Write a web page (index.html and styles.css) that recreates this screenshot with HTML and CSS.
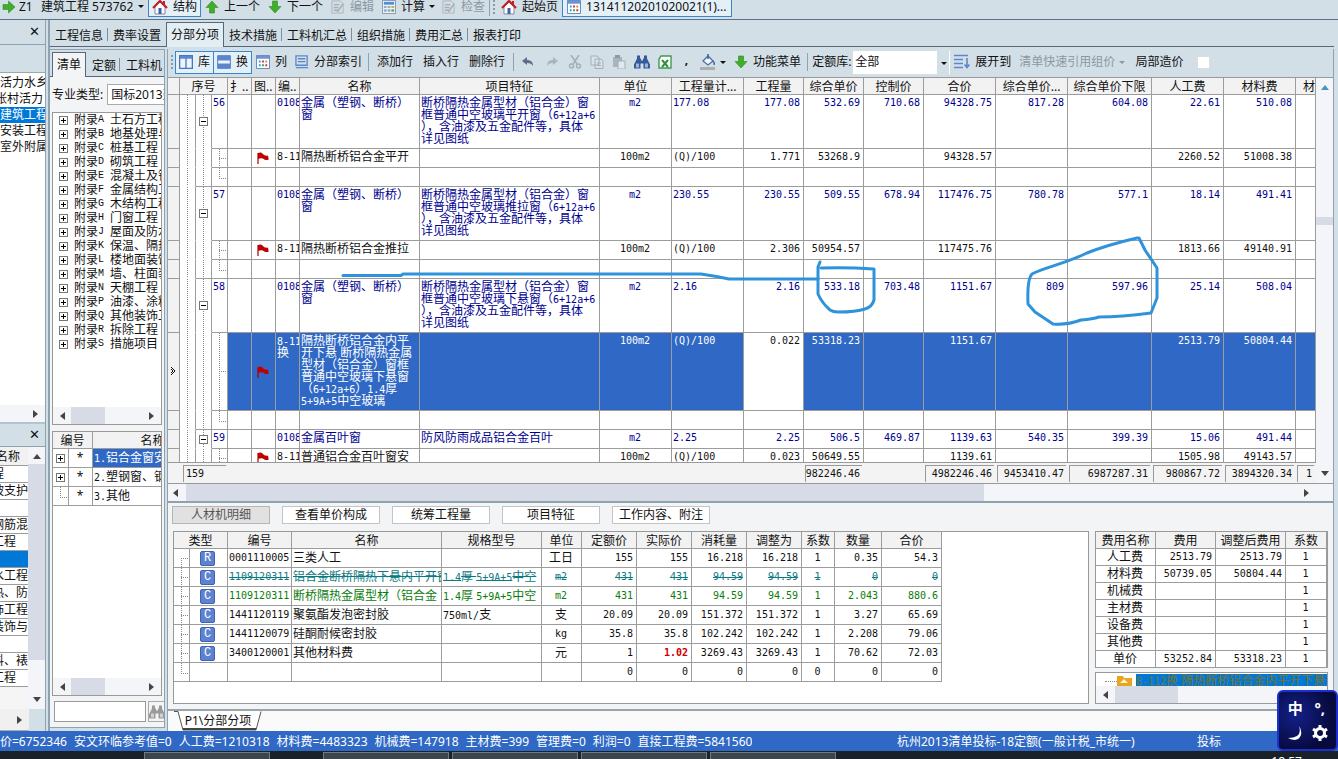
FILE: index.html
```html
<!DOCTYPE html>
<html lang="zh-CN">
<head>
<meta charset="utf-8">
<title>分部分项</title>
<link rel="stylesheet" href="styles.css">
</head>
<body>
<svg class="defs" aria-hidden="true">
  <symbol id="flag" viewBox="0 0 12 12"><path d="M1 1v11" stroke="#a00000" stroke-width="1.2"/><path d="M1 1c2-1 4-.5 5 1s3 2 5 1.500l.7 4c-2 1-4 .5-5-.6S3 6 1 7z" fill="#c00000"/></symbol>
  <symbol id="tri" viewBox="0 0 8 8"><path d="M7 0v8L2 4z" fill="#444"/></symbol>
  <symbol id="tri-blue" viewBox="0 0 8 8"><path d="M7 0v8L2 4z" fill="#4a94c4"/></symbol>
  <symbol id="house" viewBox="0 0 16 16"><path d="M3 8v7h10V8L8 3z" fill="#fff" stroke="#889" /><path d="M1 9l7-7 7 7" fill="none" stroke="#c22026" stroke-width="2.200"/><path d="M11 2h2v4h-2z" fill="#c22026"/><path d="M6.500 9h3v6h-3z" fill="#3b62b0"/></symbol>
  <symbol id="garrow" viewBox="0 0 14 14"><path d="M7 13L1 6.500h3.500V1h5v5.500H13z" fill="#3fae2a" stroke="#2f8d20" stroke-width=".6"/></symbol>
  <symbol id="sheet" viewBox="0 0 15 15"><path d="M.5.500h14v14H.5z" fill="#fff" stroke="#5a7fc0"/><path d="M1 1h13v3H1z" fill="#6f93d2"/><path d="M3 6h2v2H3zM3 10h2v2H3z" fill="#2c9fd8"/><path d="M6.500 6h2v2h-2zM10 10h2v2h-2z" fill="#d03040"/><path d="M10 6h2v2h-2z" fill="#e08030"/><path d="M6.500 10h2v2h-2z" fill="#3fa050"/></symbol>
  <symbol id="calc" viewBox="0 0 15 15"><path d="M.5.500h14v14H.5z" fill="#eef3f8" stroke="#7f95b5"/><path d="M2 2h11v3H2z" fill="#4f8fd8"/><path d="M2 6.500h3v2H2zM6 6.500h3v2H6zM2 10h3v2.500H2zM6 10h3v2.500H6z" fill="#9aabbf"/><path d="M10 6.500h3v2h-3z" fill="#e0a030"/><path d="M10 10h3v2.500h-3z" fill="#4faf50"/></symbol>
  <symbol id="edit" viewBox="0 0 15 15"><path d="M1 1h9l3 3v10H1z" fill="#d5dde2" stroke="#aab4bb"/><path d="M3 5h6M3 8h5M3 11h5M13 4l-5 7-1 2" stroke="#a3aeb6" fill="none" stroke-width="1.500"/></symbol>
  <symbol id="bino" viewBox="0 0 16 15"><path d="M3 1h3v3h1v2h2V4h1V1h3v3l3 6v4H9.500V9h-3v5H0v-4l3-6z" fill="currentColor"/><path d="M2 9h3v4H2zM11 9h3v4h-3z" fill="#fff" opacity=".55"/></symbol>
</svg>

<header class="top">
  <svg class="i14 right" ><use href="#garrow"/></svg><span class="z1">Z1</span><span class="proj">建筑工程 573762</span><button class="dd" aria-label="选择工程"></button>
  <button class="tb boxed"><svg class="i16"><use href="#house"/></svg>结构</button>
  <button class="tb g4"><svg class="i14 up"><use href="#garrow"/></svg>上一个</button>
  <button class="tb g8"><svg class="i14"><use href="#garrow"/></svg>下一个</button>
  <button class="tb g8 off" disabled><svg class="i14"><use href="#edit"/></svg>编辑</button>
  <button class="tb g8"><svg class="i14"><use href="#calc"/></svg>计算</button><button class="dd" aria-label="计算选项"></button>
  <button class="tb off g2" disabled><svg class="i14"><use href="#edit"/></svg>检查</button>
  <span class="sep tall"></span><span class="grip"></span>
  <button class="tb g4"><svg class="i16"><use href="#house"/></svg>起始页</button>
  <button class="tb boxed open"><svg class="i14"><use href="#sheet"/></svg>13141120201020021(1)...</button>
</header>

<main class="work">
  <aside class="left">
    <div class="cap"><button aria-label="关闭">✕</button></div>
    <div class="strip"></div>
    <ul class="proj-list">
      <li>活力水乡</li><li class="cut">张村活力</li><li class="on">建筑工程</li><li>安装工程</li><li>室外附属</li>
    </ul>
    <div class="hs end"><svg class="i8 flip"><use href="#tri"/></svg></div>
    <div class="cap second"><button aria-label="关闭">✕</button></div>
    <div class="chap">
      <ul>
        <li class="hd p8">名称</li><li class="p24">程</li><li>坡支护</li><li></li><li>钢筋混</li><li class="p12">工程</li><li class="on"></li><li>水工程</li><li>热、防</li><li>饰工程</li><li>装饰与</li><li></li><li>料、裱</li><li class="p12">工程</li>
      </ul>
      <div class="vs"><svg class="i8 u"><use href="#tri"/></svg><i class="thumb"></i><svg class="i8 d"><use href="#tri"/></svg></div>
    </div>
    <div class="hs low"><svg class="i8 flip"><use href="#tri"/></svg></div>
  </aside>

  <section class="frame">
    <nav class="tabs">
      <button>工程信息</button><button class="nosep">费率设置</button><button class="on">分部分项</button><button>技术措施</button><button>工料机汇总</button><button>组织措施</button><button>费用汇总</button><button class="nosep">报表打印</button>
    </nav>
    <div class="cols">
      <aside class="mid">
        <nav class="tabs sub"><button class="on">清单</button><button>定额</button><button>工料机</button></nav>
        <div class="kind"><label for="kind">专业类型:</label><select id="kind"><option>国标2013建设</option></select></div>
        <div class="box tree">
          <ul>
            <li><b></b>附录<span class="s">A</span>土石方工程</li><li><b></b>附录<span class="s">B</span>地基处理与</li><li><b></b>附录<span class="s">C</span>桩基工程</li><li><b></b>附录<span class="s">D</span>砌筑工程</li><li><b></b>附录<span class="s">E</span>混凝土及钢</li><li><b></b>附录<span class="s">F</span>金属结构工</li><li><b></b>附录<span class="s">G</span>木结构工程</li><li><b></b>附录<span class="s">H</span>门窗工程</li><li><b></b>附录<span class="s">J</span>屋面及防水</li><li><b></b>附录<span class="s">K</span>保温、隔热</li><li><b></b>附录<span class="s">L</span>楼地面装饰</li><li><b></b>附录<span class="s">M</span>墙、柱面装</li><li><b></b>附录<span class="s">N</span>天棚工程</li><li><b></b>附录<span class="s">P</span>油漆、涂料</li><li><b></b>附录<span class="s">Q</span>其他装饰工</li><li><b></b>附录<span class="s">R</span>拆除工程</li><li><b></b>附录<span class="s">S</span>措施项目</li>
          </ul>
          <div class="hs"><svg class="i8"><use href="#tri"/></svg><i class="thumb"></i><svg class="i8 flip"><use href="#tri"/></svg></div>
        </div>
        <div class="box names">
          <table class="grid">
            <colgroup><col class="w16"><col class="w24"><col class="w120"></colgroup>
            <tr><th colspan="2">编号</th><th>名称</th></tr>
            <tr><td class="pl"><b></b></td><td class="c">*</td><td class="hot"><span class="n">1.</span>铝合金窗安装</td></tr>
            <tr><td class="pl"><b></b></td><td class="c">*</td><td><span class="n">2.</span>塑钢窗、钢窗</td></tr>
            <tr><td class="elbow"></td><td class="c">*</td><td><span class="n">3.</span>其他</td></tr>
          </table>
          <div class="hs"><svg class="i8"><use href="#tri"/></svg><i class="thumb"></i><svg class="i8 flip"><use href="#tri"/></svg></div>
        </div>
        <div class="find"><input aria-label="查找"><button aria-label="查找"><svg class="i16 grey"><use href="#bino"/></svg></button></div>
      </aside>

      <div class="right-side">
        <div class="bar">
          <span class="grip"></span>
          <button class="tb boxed"><svg class="i14" viewBox="0 0 15 15"><path d="M.7.700h13.600v13.600H.7zM7.500 1v13" fill="#edf5fc" stroke="#4a74bd" stroke-width="1.400"/><path d="M1 1h13v3H1z" fill="#5c86cc"/></svg>库</button><button class="tb boxed join"><svg class="i14" viewBox="0 0 15 15"><path d="M.7.700h13.600v13.600H.7z" fill="#edf5fc" stroke="#4a74bd"/><path d="M1 1h13v5H1zM1 9h13v5H1z" fill="#5c86cc"/></svg>换</button>
          <button class="tb g4"><svg class="i14"><use href="#sheet"/></svg>列</button>
          <button class="tb g8"><svg class="i14" viewBox="0 0 15 15"><path d="M1 1h12v10H1zM3 4h8M3 7h8M1 13.500h13" fill="none" stroke="#5c86cc" stroke-width="1.400"/></svg>分部索引</button>
          <span class="sep g6"></span>
          <button class="tb g8">添加行</button><button class="tb g10">插入行</button><button class="tb g10">删除行</button>
          <span class="sep g8"></span>
          <button class="tb g8" aria-label="撤销"><svg class="i12" viewBox="0 0 12 12"><path d="M0 5l5-4v3c4 0 6 2 6 6-1-2-3-3-6-3v2z" fill="#5f6f87"/></svg></button>
          <button class="tb g12" aria-label="重做"><svg class="i12 flip" viewBox="0 0 12 12"><path d="M0 5l5-4v3c4 0 6 2 6 6-1-2-3-3-6-3v2z" fill="#a9b5be"/></svg></button>
          <button class="tb g10" aria-label="剪切"><svg class="i14" viewBox="0 0 14 14"><path d="M3 0l6 9M11 0L5 9" stroke="#a3afb7" stroke-width="1.500"/><circle cx="3.500" cy="11" r="2" fill="none" stroke="#a3afb7" stroke-width="1.400"/><circle cx="10.500" cy="11" r="2" fill="none" stroke="#a3afb7" stroke-width="1.400"/></svg></button>
          <button class="tb g8" aria-label="复制"><svg class="i14" viewBox="0 0 14 14"><path d="M1 1h6l2 2v7H1zM5 4h6l2 2v7.500H5z" fill="#d9e2e8" stroke="#a3afb7"/><path d="M7 8h4M7 10.500h4" stroke="#a3afb7"/></svg></button>
          <button class="tb g8" aria-label="粘贴"><svg class="i14" viewBox="0 0 14 14"><path d="M1 2h9v10H1z" fill="#a9b5bd"/><path d="M3 0h5v3H3z" fill="#8f9ba4"/><path d="M6 6h7v8H6z" fill="#e1e8ed" stroke="#a3afb7"/></svg></button>
          <button class="tb g8" aria-label="查找"><svg class="i16 navy"><use href="#bino"/></svg></button>
          <button class="tb g8" aria-label="导出 Excel"><svg class="i14" viewBox="0 0 14 14"><path d="M3 1h10v12H1V4z" fill="#fff" stroke="#3f9a4c" stroke-width="1.400"/><path d="M4 5l6 7M10 5l-6 7" stroke="#2f8f40" stroke-width="2"/></svg></button>
          <span class="comma">,</span>
          <button class="tb g12" aria-label="填充颜色"><svg class="i16" viewBox="0 0 16 16"><path d="M3 7l5-5 5 5-5 4z" fill="#f3f7fb" stroke="#4c6ea8" stroke-width="1.300"/><path d="M8 5V0M13 7q2 2 1 4" stroke="#3b62a4" stroke-width="1.500" fill="none"/><path d="M0 13h15v3H0z" fill="#b2adaa"/></svg></button><button class="dd" aria-label="颜色选项"></button>
          <button class="tb g4"><svg class="i14"><use href="#garrow"/></svg>功能菜单</button>
          <span class="sep g6"></span>
          <label for="lib">定额库:</label><span class="combo"><select id="lib"><option>全部</option></select></span>
          <button class="tb g4"><svg class="i16" viewBox="0 0 16 16"><path d="M0 1.500h14M0 5.500h9M0 9.500h9M0 13.500h9M13 4v9M10.500 10.500l2.500 3 2.500-3" fill="none" stroke="#5c86cc" stroke-width="1.600"/></svg>展开到</button>
          <button class="tb g8 off" disabled>清单快速引用组价</button><button class="dd dim" aria-label="组价选项"></button>
          <label class="chk" for="part">局部造价</label><input id="part" type="checkbox">
        </div>

        <div class="sheet">
          <div class="view">
            <div class="body">
            <table class="grid main">
              <colgroup><col class="w12"><col class="w16"><col class="w16"><col class="w16"><col class="w24"><col class="w24"><col class="w24"><col class="w120"><col class="w180"><col class="w72"><col class="w72"><col class="w60"><col class="w60"><col class="w60"><col class="w72"><col class="w72"><col class="w84"><col class="w72"><col class="w72"><col></colgroup>
              <tr><th></th><th colspan="3">序号</th><th class="nar">扌..</th><th class="nar">图..</th><th class="nar">编..</th><th>名称</th><th>项目特征</th><th>单位</th><th>工程量计...</th><th>工程量</th><th>综合单价</th><th>控制价</th><th>合价</th><th>综合单价...</th><th>综合单价下限</th><th>人工费</th><th>材料费</th><th class="last">材</th></tr>
              <tr class="item"><td></td><td class="v"></td><td class="v ex"><b></b></td><td class="n">56</td><td></td><td></td><td class="n">0108</td><td>金属（塑钢、断桥）<br>窗</td><td>断桥隔热金属型材（铝合金）窗<br>框普通中空玻璃平开窗（<span class="n">6+12a+6</span><br>），含油漆及五金配件等，具体<br>详见图纸</td><td class="n c">m2</td><td class="n">177.08</td><td class="n r">177.08</td><td class="n r">532.69</td><td class="n r">710.68</td><td class="n r">94328.75</td><td class="n r">817.28</td><td class="n r">604.08</td><td class="n r">22.61</td><td class="n r">510.08</td><td></td></tr>
              <tr><td></td><td class="v"></td><td class="v"></td><td class="tee"></td><td></td><td class="fl"><svg class="i12"><use href="#flag"/></svg></td><td class="n">8-112</td><td>隔热断桥铝合金平开</td><td></td><td class="n c">100m2</td><td class="n">(Q)/100</td><td class="n r">1.771</td><td class="n r">53268.9</td><td></td><td class="n r">94328.57</td><td></td><td></td><td class="n r">2260.52</td><td class="n r">51008.38</td><td></td></tr>
              <tr><td></td><td class="v"></td><td class="v bb"></td><td class="elbow"></td><td></td><td></td><td></td><td></td><td></td><td></td><td></td><td></td><td></td><td></td><td></td><td></td><td></td><td></td><td></td><td></td></tr>
              <tr class="item"><td></td><td class="v"></td><td class="v ex"><b></b></td><td class="n">57</td><td></td><td></td><td class="n">0108</td><td>金属（塑钢、断桥）<br>窗</td><td>断桥隔热金属型材（铝合金）窗<br>框普通中空玻璃推拉窗（<span class="n">6+12a+6</span><br>），含油漆及五金配件等，具体<br>详见图纸</td><td class="n c">m2</td><td class="n">230.55</td><td class="n r">230.55</td><td class="n r">509.55</td><td class="n r">678.94</td><td class="n r">117476.75</td><td class="n r">780.78</td><td class="n r">577.1</td><td class="n r">18.14</td><td class="n r">491.41</td><td></td></tr>
              <tr><td></td><td class="v"></td><td class="v"></td><td class="tee"></td><td></td><td class="fl"><svg class="i12"><use href="#flag"/></svg></td><td class="n">8-111</td><td>隔热断桥铝合金推拉</td><td></td><td class="n c">100m2</td><td class="n">(Q)/100</td><td class="n r">2.306</td><td class="n r">50954.57</td><td></td><td class="n r">117475.76</td><td></td><td></td><td class="n r">1813.66</td><td class="n r">49140.91</td><td></td></tr>
              <tr><td></td><td class="v"></td><td class="v bb"></td><td class="elbow"></td><td></td><td></td><td></td><td></td><td></td><td></td><td></td><td></td><td></td><td></td><td></td><td></td><td></td><td></td><td></td><td></td></tr>
              <tr class="item"><td></td><td class="v"></td><td class="v ex"><b></b></td><td class="n">58</td><td></td><td></td><td class="n">0108</td><td>金属（塑钢、断桥）<br>窗</td><td>断桥隔热金属型材（铝合金）窗<br>框普通中空玻璃下悬窗（<span class="n">6+12a+6</span><br>），含油漆及五金配件等，具体<br>详见图纸</td><td class="n c">m2</td><td class="n">2.16</td><td class="n r">2.16</td><td class="n r">533.18</td><td class="n r">703.48</td><td class="n r">1151.67</td><td class="n r">809</td><td class="n r">597.96</td><td class="n r">25.14</td><td class="n r">508.04</td><td></td></tr>
              <tr class="sel"><td class="cur"><svg class="i8" viewBox="0 0 8 8"><path d="M2 0l4 4-4 4M2 2l2 2-2 2" fill="none" stroke="#111"/></svg></td><td class="v"></td><td class="v"></td><td class="tee"></td><td></td><td class="fl"><svg class="i12"><use href="#flag"/></svg></td><td><span class="n">8-112</span><br>换</td><td>隔热断桥铝合金内平<br>开下悬 断桥隔热金属<br>型材（铝合金）窗框<br>普通中空玻璃下悬窗<br>（<span class="n">6+12a+6</span>）<span class="n">1.4</span>厚<br><span class="n">5+9A+5</span>中空玻璃</td><td></td><td class="n c">100m2</td><td class="n">(Q)/100</td><td class="n r edit">0.022</td><td class="n r">53318.23</td><td></td><td class="n r">1151.67</td><td></td><td></td><td class="n r">2513.79</td><td class="n r">50804.44</td><td></td></tr>
              <tr><td></td><td class="v"></td><td class="v bb"></td><td class="elbow"></td><td></td><td></td><td></td><td></td><td></td><td></td><td></td><td></td><td></td><td></td><td></td><td></td><td></td><td></td><td></td><td></td></tr>
              <tr class="item"><td></td><td class="v"></td><td class="v ex"><b></b></td><td class="n">59</td><td></td><td></td><td class="n">0108</td><td>金属百叶窗</td><td>防风防雨成品铝合金百叶</td><td class="n c">m2</td><td class="n">2.25</td><td class="n r">2.25</td><td class="n r">506.5</td><td class="n r">469.87</td><td class="n r">1139.63</td><td class="n r">540.35</td><td class="n r">399.39</td><td class="n r">15.06</td><td class="n r">491.44</td><td></td></tr>
              <tr><td></td><td class="v"></td><td class="v"></td><td class="tee"></td><td></td><td class="fl"><svg class="i12"><use href="#flag"/></svg></td><td class="n">8-116</td><td>普通铝合金百叶窗安</td><td></td><td class="n c">100m2</td><td class="n">(Q)/100</td><td class="n r">0.023</td><td class="n r">50649.55</td><td></td><td class="n r">1139.61</td><td></td><td></td><td class="n r">1505.98</td><td class="n r">49143.57</td><td></td></tr>
            </table>
            <svg class="ink" viewBox="340 230 830 100"><g fill="none" stroke="#2f93dc" stroke-width="3" stroke-linecap="round" stroke-linejoin="round"><path d="M343 275.500h58l2-1.500h298q14 2 28 5h89"/><path d="M820 262l-2 5v27q4 9 12 16 3 2 8 2 18 0 27-3 7-2 9-9v-31q-28-2-53-1"/><path d="M1137 238q-30 7-50 15c-25 12-42 14-55 21q-5 5-4 30l7 8 18 12q15 1 28-4 12-1 18-3 22 0 52-4l6-15v-30l-12-18-6-12z"/></g></svg>
            </div>
            <table class="grid sum">
              <colgroup><col class="w12"><col class="w48"><col class="w372"><col class="w144"><col class="w60"><col class="w60"><col class="w60"><col class="w72"><col class="w72"><col class="w84"><col class="w72"><col class="w72"><col></colgroup>
              <tr><td></td><td><div class="lft">159</div></td><td></td><td></td><td></td><td><div>4982246.46</div></td><td></td><td><div>4982246.46</div></td><td><div>9453410.47</div></td><td><div>6987287.31</div></td><td><div>980867.72</div></td><td><div>3894320.34</div></td><td><div>1</div></td></tr>
            </table>
          </div>
          <div class="vs wide"><svg class="i8 u"><use href="#tri-blue"/></svg><i class="thumb"></i><svg class="i8 d"><use href="#tri"/></svg></div>
        </div>
        <div class="hs big"><svg class="i8"><use href="#tri"/></svg><i class="thumb"></i><svg class="i8 flip"><use href="#tri"/></svg></div>

        <div class="detail">
          <div class="btns"><button class="on">人材机明细</button><button>查看单价构成</button><button>统筹工程量</button><button>项目特征</button><button>工作内容、附注</button></div>
          <div class="pair">
            <div class="box big">
              <table class="grid res">
                <colgroup><col class="w16"><col class="w38"><col class="w64"><col class="w150"><col class="w100"><col class="w40"><col class="w55"><col class="w55"><col class="w55"><col class="w55"><col class="w33"><col class="w47"><col class="w60"></colgroup>
                <tr><th colspan="2">类型</th><th>编号</th><th>名称</th><th>规格型号</th><th>单位</th><th>定额价</th><th>实际价</th><th>消耗量</th><th>调整为</th><th>系数</th><th>数量</th><th>合价</th></tr>
                <tr><td class="tee first"></td><td class="k"><b>R</b></td><td class="n">0001110005</td><td>三类人工</td><td></td><td class="c">工日</td><td class="n r">155</td><td class="n r">155</td><td class="n r">16.218</td><td class="n r">16.218</td><td class="n c">1</td><td class="n r">0.35</td><td class="n r">54.3</td></tr>
                <tr class="del"><td class="tee"></td><td class="k"><b>C</b></td><td class="n">1109120311</td><td>铝合金断桥隔热下悬内平开窗</td><td><span class="n">1.4</span>厚 <span class="n">5+9A+5</span>中空</td><td class="n c">m2</td><td class="n r">431</td><td class="n r">431</td><td class="n r">94.59</td><td class="n r">94.59</td><td class="n c">1</td><td class="n r">0</td><td class="n r">0</td></tr>
                <tr class="add"><td class="tee"></td><td class="k"><b>C</b></td><td class="n">1109120311</td><td>断桥隔热金属型材（铝合金</td><td><span class="n">1.4</span>厚 <span class="n">5+9A+5</span>中空</td><td class="n c">m2</td><td class="n r">431</td><td class="n r">431</td><td class="n r">94.59</td><td class="n r">94.59</td><td class="n c">1</td><td class="n r">2.043</td><td class="n r">880.6</td></tr>
                <tr><td class="tee"></td><td class="k"><b>C</b></td><td class="n">1441120119</td><td>聚氨酯发泡密封胶</td><td><span class="n">750ml/</span>支</td><td class="c">支</td><td class="n r">20.09</td><td class="n r">20.09</td><td class="n r">151.372</td><td class="n r">151.372</td><td class="n c">1</td><td class="n r">3.27</td><td class="n r">65.69</td></tr>
                <tr><td class="tee"></td><td class="k"><b>C</b></td><td class="n">1441120079</td><td>硅酮耐候密封胶</td><td></td><td class="n c">kg</td><td class="n r">35.8</td><td class="n r">35.8</td><td class="n r">102.242</td><td class="n r">102.242</td><td class="n c">1</td><td class="n r">2.208</td><td class="n r">79.06</td></tr>
                <tr><td class="tee"></td><td class="k"><b>C</b></td><td class="n">3400120001</td><td>其他材料费</td><td></td><td class="c">元</td><td class="n r">1</td><td class="n r red">1.02</td><td class="n r">3269.43</td><td class="n r">3269.43</td><td class="n c">1</td><td class="n r">70.62</td><td class="n r">72.03</td></tr>
                <tr><td class="elbow"></td><td></td><td></td><td></td><td></td><td></td><td class="n r">0</td><td class="n r">0</td><td class="n r">0</td><td class="n r">0</td><td class="n c">0</td><td class="n r">0</td><td class="n r">0</td></tr>
              </table>
            </div>
            <div class="fees">
              <div class="box top-box">
              <table class="grid fee">
                <colgroup><col class="w60"><col class="w60"><col class="w70"><col></colgroup>
                <tr><th>费用名称</th><th>费用</th><th>调整后费用</th><th>系数</th></tr>
                <tr><td class="c">人工费</td><td class="n r">2513.79</td><td class="n r">2513.79</td><td class="n c">1</td></tr>
                <tr><td class="c">材料费</td><td class="n r">50739.05</td><td class="n r">50804.44</td><td class="n c">1</td></tr>
                <tr><td class="c">机械费</td><td></td><td></td><td class="n c">1</td></tr>
                <tr><td class="c">主材费</td><td></td><td></td><td class="n c">1</td></tr>
                <tr><td class="c">设备费</td><td></td><td></td><td class="n c">1</td></tr>
                <tr><td class="c">其他费</td><td></td><td></td><td class="n c">1</td></tr>
                <tr><td class="c">单价</td><td class="n r">53252.84</td><td class="n r">53318.23</td><td class="n c">1</td></tr>
              </table>
              </div>
              <div class="box mini">
                <div class="leaf"><i class="dots"></i><svg class="fold" viewBox="0 0 15 13"><path d="M0 2h6l1 2h8v9H0z" fill="#e8a520"/><path d="M3 9l4-4 4 4z" fill="#fff4c8"/></svg><span class="pick"><span class="n">8-112</span>换 隔热断桥铝合金内平开下悬</span></div>
                <div class="hs"><svg class="i8"><use href="#tri"/></svg><i class="thumb"></i></div>
              </div>
            </div>
          </div>
        </div>
        <div class="pages"><button><svg viewBox="0 0 88 20"><path d="M0 .5h4L9 19h73l5-18.500" fill="#fff" stroke="#555"/><path d="M9 18h73" stroke="#444" stroke-width="2"/></svg><span>P1\分部分项</span></button></div>
      </div>
    </div>
  </section>
</main>

<footer class="status"><div class="tot"><span>价=6752346</span><span>安文环临参考值=0</span><span>人工费=1210318</span><span>材料费=4483323</span><span>机械费=147918</span><span>主材费=399</span><span>管理费=0</span><span>利润=0</span><span>直接工程费=5841560</span></div><span class="rule">杭州2013清单投标-18定额(一般计税_市统一)</span><span class="mode">投标</span></footer>
<div class="task"><i></i><i class="far"></i><i></i><i></i><i></i><time>18:57</time></div>
<div class="ime"><span>中</span><span>°,</span>
  <svg viewBox="0 0 16 16"><path d="M12 1q4 12-11 12 10 5 13-3 1-5-2-9z" fill="#fff"/></svg>
  <svg viewBox="0 0 16 16"><circle cx="8" cy="8" r="4.500" fill="none" stroke="#fff" stroke-width="3"/><path d="M8 0v3M8 13v3M1 4l3 2M12 10l3 2M1 12l3-2M12 6l3-2" stroke="#fff" stroke-width="3"/></svg>
</div>
</body>
</html>
```
FILE: styles.css
```css
* { box-sizing: border-box; }
html, body { height: 100%; }
body {
  margin: 0; display: flex; flex-direction: column; overflow: hidden;
  background: #d3dfe7; color: #111;
  font: 12px/16px "Noto Sans", "Noto Sans CJK SC", sans-serif;
  white-space: nowrap; position: relative;
}
button, select, input { font: inherit; color: inherit; margin: 0; padding: 0; }
button { border: 0; background: none; white-space: nowrap; }
ul { list-style: none; margin: 0; padding: 0; }
svg { display: block; flex: none; }
.defs { position: absolute; width: 0; height: 0; }
.i8 { width: 8px; height: 8px; }
.i12 { width: 12px; height: 12px; }
.i14 { width: 14px; height: 14px; }
.i16 { width: 16px; height: 16px; }
.flip { transform: scaleX(-1); }
.up { transform: scaleY(-1); }
.right { transform: rotate(-90deg); }
.u { transform: rotate(90deg); }
.d { transform: rotate(-90deg); }
.n { font: 10px/10px "DejaVu Sans Mono", monospace; }
.grey { color: #999; }
.navy { color: #345a9c; }

/* buttons shared by both tool bars */
.tb { display: flex; align-items: center; gap: 5px; flex: none; }
.off { color: #8b98a2; }
.boxed { border: 1px solid #3a86c8; background: #e4f0f8; padding: 0 3px; height: 23px; }
.join { margin-left: -1px; }
.sep { width: 1px; height: 18px; background: #8fa2b0; flex: none; }
.grip { width: 2px; height: 14px; flex: none; background: repeating-linear-gradient(#8a9aa6 0 2px, transparent 2px 4px); }
.dd { width: 14px; height: 16px; display: grid; place-items: center; flex: none; }
.dd::after { content: ""; border: 3px solid transparent; border-top-color: #111; margin-top: 3px; }
.dim::after { border-top-color: #8b98a2; }
.g2 { margin-left: 3px; }
.g4 { margin-left: 4px; }
.g6 { margin-left: 6px; }
.g8 { margin-left: 8px; }
.g10 { margin-left: 10px; }
.g12 { margin-left: 12px; }

.top { height: 20px; flex: none; display: flex; align-items: center; padding: 0 0 6px 2px; border-bottom: 1px solid #5b7186; overflow: hidden; }
.top .boxed { height: 21px; padding: 0 3px; }
.top .boxed.open { margin-left: 4px; padding: 0 4px; }
.z1 { margin-left: 3px; width: 22px; }
.proj { width: 93px; overflow: hidden; }
.top .sep { margin: 0 3px 0 4px; }
.top .grip + .tb { margin-left: 6px; }

.work { flex: 1; display: flex; min-height: 0; }

/* far left docked panels */
.left { width: 46px; flex: none; display: flex; flex-direction: column; border-right: 1px solid #8fa2b0; overflow: hidden; }
.cap { height: 25px; flex: none; display: flex; justify-content: flex-end; align-items: center; padding-right: 5px; border-bottom: 1px solid #8fa2b0; }
.cap button { font: 13px/12px "DejaVu Sans", sans-serif; }
.cap.second { border-top: 2px solid #b3c4cf; }
.strip { height: 28px; flex: none; border-bottom: 1px solid #9aa; }
.proj-list { flex: 1; background: #fff; padding-top: 2px; overflow: hidden; }
.proj-list li { height: 16px; }
.proj-list .cut { display: flex; justify-content: flex-end; padding-right: 2px; }
.proj-list .on, .chap .on { background: #0078d7; color: #fff; }
.hs { height: 17px; flex: none; background: #f3f5f8; display: flex; align-items: center; padding: 0 5px; }
.hs .flip { margin-left: auto; }
.hs .thumb { height: 100%; width: 34px; margin-left: 5px; background: #d6dbe6; }
.chap { display: flex; height: 262px; flex: none; background: #f5f5f5; }
.chap ul { width: 28px; }
.chap li { height: 17px; background: #fff; border-bottom: 1px solid #9c9c9c; display: flex; justify-content: flex-end; overflow: hidden; }
.chap .hd { background: #f1f1f1; height: 19px; line-height: 20px; }
.chap .p8 { padding-right: 8px; }
.chap .p12 { padding-right: 12px; }
.chap .p24 { padding-right: 24px; }
.vs { width: 17px; background: #f3f5f8; display: flex; flex-direction: column; align-items: center; justify-content: space-between; padding: 5px 0; }
.vs .thumb { flex: none; width: 100%; height: 196px; background: #d6dbe6; margin: 4px 0 auto; }
.hs.low { height: 22px; background: #f0f0f0; width: 29px; border-bottom: 1px solid #aaa; }

/* document frame */
.frame { flex: 1; min-width: 0; display: flex; flex-direction: column; border-left: 2px solid #8fa2b0; margin-left: 2px; padding-right: 4px; }
.tabs { display: flex; height: 27px; flex: none; padding-top: 2px; border-bottom: 1px solid #56687a; }
.tabs button { padding: 4px 5px 0; position: relative; height: 24px; }
.tabs button:not(.on):not(.nosep)::after { content: ""; position: absolute; right: 0; top: 6px; height: 13px; width: 1px; background: #7d8f9d; }
.tabs .on { border: 1px solid #56687a; border-bottom: 0; padding: 0 4px; background: #e3edf4; height: 25px; }
.cols { flex: 1; display: flex; min-height: 0; padding-top: 2px; }
.mid { width: 115px; flex: none; display: flex; flex-direction: column; padding: 0 2px 3px 2px; margin-bottom: 3px; background: #f3f4f5; border: 1px solid #8fa2b0; border-left: 0; overflow: hidden; }
.sub { margin: 0 -2px; padding-left: 2px; background: #d3dfe7; }
.sub .on { background: #f3f4f5; }
.sub button + button { padding-left: 6px; padding-right: 4px; }
.kind { display: flex; align-items: center; gap: 4px; height: 35px; flex: none; }
select { appearance: none; background: #fff; border: 1px solid #aaa; border-radius: 0; }
.kind select { width: 90px; height: 21px; padding-left: 3px; flex: none; }
.box { background: #fff; border: 1px solid #999; }
.tree { height: 313px; display: flex; flex-direction: column; overflow: hidden; flex: none; }
.tree ul { flex: 1; }
.tree li { height: 14px; line-height: 14px; display: flex; align-items: center; }
.tree b, .pl b, .ex b { width: 9px; height: 9px; border: 1px solid #777; flex: none; display: block; background: linear-gradient(#000, #000) center/5px 1px no-repeat, linear-gradient(#000, #000) center/1px 5px no-repeat, #fff; }
.tree b { margin: 0 6px 0 6px; }
.tree .s { font: 10px/14px "Liberation Mono", monospace; width: 12px; flex: none; }
.names { flex: 1; margin-top: 6px; min-height: 0; display: flex; flex-direction: column; justify-content: space-between; overflow: hidden; }
.names .grid { width: 160px; }
.find { display: flex; gap: 2px; padding: 5px 0 0 2px; height: 28px; flex: none; }
.find input { width: 92px; height: 21px; border: 1px solid #999; background: #fff; flex: none; }
.find button { border: 1px solid #aaa; height: 21px; flex: none; }

/* data grids */
.grid { table-layout: fixed; border-collapse: separate; border-spacing: 0; width: 100%; line-height: 12px; background: #fff; }
.grid td, .grid th { border: 0 solid #9c9c9c; border-width: 0 1px 1px 0; overflow: hidden; padding: 2px 2px 3px 1px; vertical-align: top; }
.grid td { height: 19px; }
.grid th { font-weight: normal; text-align: center; background: #f2f2f2; height: 17px; padding: 0; line-height: 15px; vertical-align: middle; }
.grid .nar { text-align: left; padding-left: 2px; }
.grid .last { text-align: right; }
.grid td.n { line-height: 12px; }
.grid td.r { text-align: right; padding-right: 3px; }
.grid td.c { text-align: center; }
.w12 { width: 12px; } .w16 { width: 16px; } .w24 { width: 24px; } .w33 { width: 33px; }
.w38 { width: 38px; } .w40 { width: 40px; } .w47 { width: 47px; } .w48 { width: 48px; }
.w55 { width: 55px; } .w60 { width: 60px; } .w64 { width: 64px; } .w70 { width: 70px; }
.w72 { width: 72px; } .w84 { width: 84px; } .w100 { width: 100px; } .w120 { width: 120px; }
.w144 { width: 144px; } .w150 { width: 150px; } .w180 { width: 180px; } .w372 { width: 372px; }
.item { color: #000090; }
.main td:first-child { background: #f2f2f2; }
.grid td.v { border-bottom-color: transparent; background: repeating-linear-gradient(#888 0 1px, transparent 1px 2px) 7px 0/1px 100% no-repeat; background-clip: border-box; }
.grid td.bb { border-bottom-color: #9c9c9c; }
.grid td.ex { vertical-align: middle; padding: 0 0 0 3px; }
.ex b { background: linear-gradient(#000, #000) center/5px 1px no-repeat, #fff; }
.grid td.tee { background: repeating-linear-gradient(#888 0 1px, transparent 1px 2px) 7px 0/1px 100% no-repeat, repeating-linear-gradient(90deg, #888 0 1px, transparent 1px 2px) 7px 50%/8px 1px no-repeat; }
.grid td.elbow { background: repeating-linear-gradient(#888 0 1px, transparent 1px 2px) 7px 0/1px 10px no-repeat, repeating-linear-gradient(90deg, #888 0 1px, transparent 1px 2px) 7px 10px/8px 1px no-repeat; }
.grid td.fl { vertical-align: middle; padding: 0 0 0 5px; }
.grid td.cur { vertical-align: middle; }
.sel td:nth-child(n+5) { background: #2f69c5; color: #fff; }
.grid .sel td.edit { background: #fff; color: #111; }
.grid td.hot { background: #2f69c5; color: #fff; }

.right-side { flex: 1; min-width: 0; display: flex; flex-direction: column; margin-left: 2px; border-right: 1px solid #8fa2b0; border-left: 1px solid #8fa2b0; }
.bar { height: 28px; flex: none; display: flex; align-items: center; padding: 0 0 2px 3px; }
.bar .grip { margin-right: 2px; }
.comma { width: 16px; text-align: right; font-weight: bold; line-height: 12px; padding-bottom: 4px; }
.bar label { margin-left: 4px; }
.combo { display: flex; position: relative; margin-left: 2px; }
#lib { width: 97px; height: 23px; border: 0; padding-left: 2px; background: linear-gradient(90deg, transparent 84px, #d3dfe7 84px), #fff; border-right: 1px solid #fff; }
.combo::after { content: ""; position: absolute; right: 3px; top: 11px; border: 3px solid transparent; border-top-color: #111; pointer-events: none; }
.bar .chk { margin-left: 6px; }
#part { appearance: none; width: 13px; height: 13px; background: #fff; border: 1px solid #ddd; margin-left: 14px; }

.sheet { flex: 1; min-height: 0; display: flex; border-top: 1px solid #999; border-bottom: 1px solid #999; overflow: hidden; }
.view { flex: 1; min-width: 0; display: flex; flex-direction: column; }
.body { flex: 1; min-height: 0; overflow: hidden; position: relative; }
.ink { position: absolute; left: 172px; top: 152px; width: 830px; height: 100px; }
.sum { flex: none; border-top: 1px solid #999; background: #f3f3f3; }
.grid.sum td { border: 0; height: 20px; padding: 2px 2px 0 1px; }
.sum div { border: 1px solid #999; border-width: 1px 0 0 1px; height: 17px; display: flex; justify-content: flex-end; overflow: hidden; padding-right: 2px; font: 10px/16px "DejaVu Sans Mono", monospace; }
.sum .lft { justify-content: flex-start; padding-left: 2px; margin-left: 2px; }
.vs.wide { width: 17px; }
.vs.wide .thumb { height: 8px; margin: 126px 0 auto; }
.hs.big { height: 19px; padding: 0 22px 0 3px; border-bottom: 2px solid #8fa2b0; }
.hs.big .thumb { width: 70%; margin-left: 7px; }

.detail { flex: none; background: #f2f4f5; padding: 3px 4px 5px; border-bottom: 2px solid #98a5ac; }
.btns { display: flex; gap: 12px; height: 25px; }
.btns button { width: 98px; height: 18px; background: #fff; border: 1px solid #c4c4c4; line-height: 16px; }
.btns .on { background: #e1e1e1; border-color: #b5b5b5; color: #555; }
.pair { display: flex; gap: 6px; padding: 0 1px; height: 173px; }
.pair .big { flex: 1; }
.res { width: 768px; }
.grid.res td, .grid.fee td, .names .grid td { vertical-align: middle; padding-top: 0; padding-bottom: 0; }
.names .grid td.pl { padding-left: 3px; }
.grid.res td.k { padding: 0 0 0 10px; }
.k b { display: block; width: 15px; height: 15px; border: 1px solid #3f62b4; border-radius: 2px; background: #5d82d0; color: #fff; font: 12px/13px "Liberation Mono", monospace; text-align: center; }
.grid.res .first { background-position: 7px 9px, 7px 50%; }
.del td { color: #0c7a80; text-decoration: line-through; }
.grid .del td.k { text-decoration: none; }
.add td { color: #0a7d0a; }
.grid td.red { color: #c00; font-weight: bold; }
.fees { width: 233px; display: flex; flex-direction: column; gap: 4px; min-height: 0; }
.top-box { border-bottom: 0; flex: none; }
.grid.fee td { height: 17px; }
.mini { flex: 1; min-height: 0; overflow: hidden; display: flex; flex-direction: column; }
.leaf { flex: 1; display: flex; overflow: hidden; min-height: 0; padding: 1px 0 0 9px; }
.dots { width: 12px; height: 8px; border-bottom: 1px dotted #888; flex: none; }
.fold { width: 15px; height: 13px; }
.pick { margin-left: 4px; background: #0078d7; color: #77752c; line-height: 14px; flex: 1; overflow: hidden; }
.mini .thumb { width: 63px; margin-left: 6px; }
.pages { height: 20px; flex: none; background: #fafafa; padding-left: 6px; }
.pages button { display: grid; width: 88px; height: 20px; line-height: 19px; }
.pages svg, .pages span { grid-area: 1 / 1; }
.pages svg { width: 88px; height: 20px; }

.status { height: 20px; flex: none; display: flex; background: #2f69c5; color: #fff; line-height: 22px; }
.rule { margin-left: auto; width: 300px; }
.mode { width: 141px; }
.tot { display: flex; gap: 7px; overflow: hidden; }
.task { height: 8px; flex: none; background: #1b2128; display: flex; gap: 3px; padding: 1px 0 0 144px; overflow: hidden; }
.task i { width: 126px; border: 1px solid #737a80; background: #3c454c; height: 12px; flex: none; }
.task .far { margin-left: 50px; }
.task time { color: #fff; margin-left: auto; padding: 2px 36px 0 0; }
.ime { position: absolute; right: 0; bottom: 8px; width: 61px; height: 61px; border: 2px solid #1c2fd0; border-radius: 6px; background: radial-gradient(circle at 30% 40%, #14208a, #060a3c 70%); color: #fff; display: grid; grid-template-columns: 1fr 1fr; place-items: center; padding: 4px; font-size: 15px; font-weight: bold; }
.ime svg { width: 16px; height: 16px; }
```
